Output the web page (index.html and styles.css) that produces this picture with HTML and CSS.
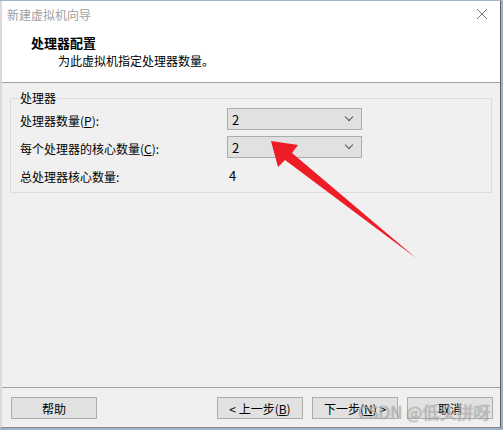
FILE: index.html
```html
<!DOCTYPE html>
<html lang="zh-CN">
<head>
    <meta charset="UTF-8">
    <title>新建虚拟机向导</title>
    <link rel="stylesheet" href="styles.css">
</head>
<body>
    <div class="window">
        <div class="titlebar">
            <span class="title">新建虚拟机向导</span>
            <svg class="close" width="12" height="12" viewBox="0 0 12 12">
                <path d="M1 1L11 11M11 1L1 11" stroke="#7a7a7a" stroke-width="1" fill="none"/>
            </svg>
        </div>
        <div class="header">
            <div class="header-title">处理器配置</div>
            <div class="header-sub">为此虚拟机指定处理器数量。</div>
        </div>
        <div class="content">
            <fieldset class="group">
                <legend>处理器</legend>
                <div class="grid">
                    <div class="label">处理器数量(<u>P</u>):</div>
                    <div class="select"><span>2</span><span class="chev"></span></div>
                    <div class="label">每个处理器的核心数量(<u>C</u>):</div>
                    <div class="select"><span>2</span><span class="chev"></span></div>
                    <div class="label">总处理器核心数量:</div>
                    <div class="value">4</div>
                </div>
            </fieldset>
        </div>
        <div class="footer">
            <button class="btn">帮助</button>
            <div class="nav">
                <button class="btn">&lt; 上一步(<u>B</u>)</button>
                <button class="btn">下一步(<u>N</u>) &gt;</button>
                <button class="btn">取消</button>
            </div>
        </div>
        <div class="watermark">CSDN @低头拼呀</div>
        <svg class="arrow" width="503" height="430" viewBox="0 0 503 430">
            <polygon points="271,141 298,145 292,153 416,258 285,160 278,167" fill="#ee1c25"/>
        </svg>
    </div>
</body>
</html>
```
FILE: styles.css
```css
* {
    box-sizing: border-box;
}
html, body {
    margin: 0;
    padding: 0;
}
body {
    width: 503px;
    height: 430px;
    background: #9fb4c6;
    font-family: "Noto Sans CJK SC", "Microsoft YaHei", sans-serif;
    font-size: 12px;
    color: #000;
    overflow: hidden;
}
.window {
    position: relative;
    margin-top: 1px;
    width: 501px;
    height: 427px;
    background: #f0f0f0;
    border-left: 2px solid #dadada;
    border-right: 1px solid #5f5f5f;
    border-bottom: 1px solid #8a8a8a;
    display: flex;
    flex-direction: column;
}
.titlebar {
    height: 26px;
    background: #fff;
    display: flex;
    align-items: center;
    justify-content: space-between;
    padding: 0 12px 0 5px;
}
.title {
    color: #a0a0a0;
    font-size: 12px;
}
.header {
    height: 56px;
    background: #fff;
    border-bottom: 1px solid #a0a0a0;
    padding: 7px 0 0 29px;
}
.header-title {
    font-weight: bold;
    font-size: 13px;
    line-height: 18px;
}
.header-sub {
    padding-left: 27px;
    line-height: 17px;
}
.content {
    flex: 1;
    padding: 7px 8px 0 8px;
}
.group {
    margin: 0;
    border: 1px solid #dcdcdc;
    padding: 2px 8px 6px 9px;
}
.group legend {
    padding: 0 1px;
    margin-left: -1px;
    line-height: 16px;
}
.grid {
    display: grid;
    grid-template-columns: 207px 135px;
    grid-auto-rows: 22px;
    row-gap: 6px;
    align-items: center;
}
.label {
    padding-top: 2px;
}
.select {
    height: 22px;
    background: #e1e1e1;
    border: 1px solid #adadad;
    display: flex;
    align-items: center;
    justify-content: space-between;
    padding: 0 9px 0 4px;
    font-size: 13px;
}
.chev {
    width: 6px;
    height: 6px;
    border-right: 1px solid #555;
    border-bottom: 1px solid #555;
    transform: rotate(45deg);
    margin-top: -4px;
}
.value {
    padding-left: 2px;
    font-size: 13px;
}
.footer {
    height: 40px;
    border-top: 1px solid #a0a0a0;
    display: flex;
    justify-content: space-between;
    padding: 9px 7px 0 9px;
}
.nav {
    display: flex;
    gap: 9px;
}
.btn {
    width: 86px;
    height: 22px;
    background: #e1e1e1;
    border: 1px solid #adadad;
    font-family: inherit;
    font-size: 12px;
    padding: 0;
    color: #000;
}
.watermark {
    position: absolute;
    left: 356px;
    top: 398px;
    font-size: 17px;
    color: rgba(215, 215, 215, 0.65);
    text-shadow: 0 0 1px rgba(60, 60, 60, 0.6);
    white-space: nowrap;
}
.arrow {
    position: absolute;
    left: -2px;
    top: -1px;
    pointer-events: none;
}
```
